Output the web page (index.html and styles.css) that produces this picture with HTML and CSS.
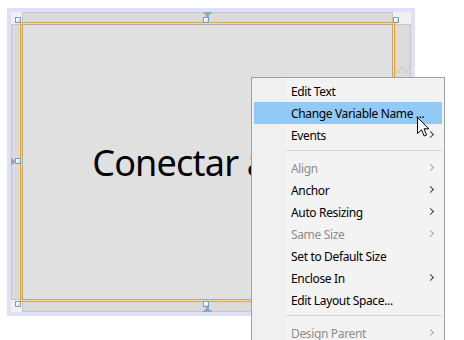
FILE: index.html
```html
<!DOCTYPE html>
<html lang="es">
<head>
    <meta charset="UTF-8">
    <meta name="viewport" content="width=device-width, initial-scale=1.0">
    <title>Diseñador</title>
    <link rel="stylesheet" href="styles.css">
</head>
<body>
    <div class="frame">
        <div class="surface">
            <div class="corner"></div>
            <div class="strip strip-top"></div>
            <div class="corner"></div>

            <div class="strip strip-left"></div>
            <div class="button-cell">
                <div class="design-button">Conectar a BD</div>
            </div>
            <div class="strip strip-right">
                <svg class="zigzag" width="16" height="9" viewBox="0 0 16 9">
                    <polyline points="0,0 4,8 8,1 12,8 16,0" fill="none" stroke="#c6c6c6" stroke-width="1"/>
                </svg>
            </div>

            <div class="corner"></div>
            <div class="strip strip-bottom"></div>
            <div class="corner"></div>

            <!-- grab handles -->
            <span class="handle" style="left:4px;top:5px"></span>
            <span class="handle" style="left:192px;top:5px"></span>
            <span class="handle" style="left:382px;top:5px"></span>
            <span class="handle" style="left:4px;top:146px"></span>
            <span class="handle" style="left:382px;top:146px"></span>
            <span class="handle" style="left:4px;top:289px"></span>
            <span class="handle" style="left:192px;top:289px"></span>
            <span class="handle" style="left:382px;top:289px"></span>

            <!-- anchors -->
            <svg class="anchor anchor-top" width="9" height="5" viewBox="0 0 9 5">
                <polygon points="0,0 9,0 9,1 6,3 6,5 3,5 3,3 0,1"/>
            </svg>
            <svg class="anchor anchor-left" width="5" height="7" viewBox="0 0 5 7">
                <polygon points="0,0 1,0 3,2 5,2 5,5 3,5 1,7 0,7"/>
            </svg>
            <svg class="anchor anchor-bottom" width="9" height="5" viewBox="0 0 9 5">
                <polygon points="3,0 6,0 6,2 9,4 9,5 0,5 0,4 3,2"/>
            </svg>
        </div>
    </div>

    <div class="context-menu">
        <div class="menu-item">Edit Text</div>
        <div class="menu-item active">Change Variable Name ...</div>
        <div class="menu-item has-sub">Events</div>
        <div class="menu-sep"></div>
        <div class="menu-item has-sub disabled">Align</div>
        <div class="menu-item has-sub">Anchor</div>
        <div class="menu-item has-sub">Auto Resizing</div>
        <div class="menu-item has-sub disabled">Same Size</div>
        <div class="menu-item">Set to Default Size</div>
        <div class="menu-item has-sub">Enclose In</div>
        <div class="menu-item">Edit Layout Space...</div>
        <div class="menu-sep"></div>
        <div class="menu-item has-sub disabled">Design Parent</div>
    </div>

    <svg class="cursor" width="13" height="20" viewBox="0 0 13 20">
        <path d="M0.5 0.5 L0.5 16.5 L4.5 12.8 L7.2 19 L9.6 18 L7 11.8 L12 11.8 Z" fill="#fff" stroke="#000" stroke-width="1" stroke-linejoin="miter"/>
    </svg>
</body>
</html>
```

FILE: styles.css
```css
* {
    margin: 0;
    padding: 0;
    box-sizing: border-box;
}

html, body {
    overflow: hidden;
}

body {
    background: #fff;
    font-family: 'Noto Sans', 'Open Sans', sans-serif;
    position: relative;
    height: 340px;
}

.frame {
    margin: 8px 0 0 7px;
    width: 408px;
    height: 308px;
    padding: 4px;
    background: #dfdff9;
}

.surface {
    position: relative;
    display: grid;
    grid-template-columns: 11px 371px 18px;
    grid-template-rows: 12px 276px 12px;
    height: 300px;
}

.corner {
    background: #f0f0f0;
}

.strip {
    background: #dadada;
    border: 1px solid #c6c6c6;
}

.strip-top {
    border-bottom: none;
}

.strip-bottom {
    border-top: none;
}

.strip-left {
    border-right: none;
}

.strip-right {
    background: #dcdcdc;
    border-left: none;
    padding: 40px 0 0 1px;
}

.zigzag {
    display: block;
}

.button-cell {
    position: relative;
    z-index: 1;
}

.design-button {
    height: 100%;
    background: #e0e0e0;
    border: 1px solid #a9a9a9;
    outline: 1px solid #ffa500;
    outline-offset: 1px;
    display: flex;
    align-items: center;
    justify-content: center;
    font-size: 36px;
    letter-spacing: -0.8px;
    color: #000;
    white-space: nowrap;
}

.handle {
    position: absolute;
    z-index: 2;
    width: 6px;
    height: 6px;
    border: 1px solid #819cba;
    background: linear-gradient(135deg, #ffffff 30%, #c5d4e4 100%);
}

.anchor {
    position: absolute;
    z-index: 2;
    fill: #8ea7c2;
}

.anchor-top {
    left: 192px;
    top: 0;
}

.anchor-left {
    left: 0;
    top: 146px;
}

.anchor-bottom {
    left: 192px;
    top: 295px;
}

.context-menu {
    position: absolute;
    z-index: 5;
    left: 251px;
    top: 77px;
    width: 194px;
    padding: 2px;
    border: 1px solid #a0a0a0;
    background: linear-gradient(to right, #f0f0f0 0, #f0f0f0 34px, #f3f3f3 34px);
    font-size: 12px;
    letter-spacing: -0.35px;
    color: #000;
}

.menu-item {
    position: relative;
    height: 22px;
    padding: 3px 0 0 37px;
    line-height: 17px;
    white-space: nowrap;
}

.menu-item.active {
    background: #91c9f7;
}

.menu-item.disabled {
    color: #8d8d8d;
}

.menu-item.has-sub::after {
    content: '';
    position: absolute;
    right: 9px;
    top: 8px;
    width: 4px;
    height: 4px;
    border-top: 1px solid #404040;
    border-right: 1px solid #404040;
    transform: rotate(45deg);
}

.menu-item.disabled::after {
    border-color: #a8a8a8;
}

.menu-sep {
    height: 1px;
    margin: 4px 0 6px 32px;
    background: #d7d7d7;
}

.cursor {
    position: absolute;
    z-index: 6;
    left: 417px;
    top: 117px;
}
```
